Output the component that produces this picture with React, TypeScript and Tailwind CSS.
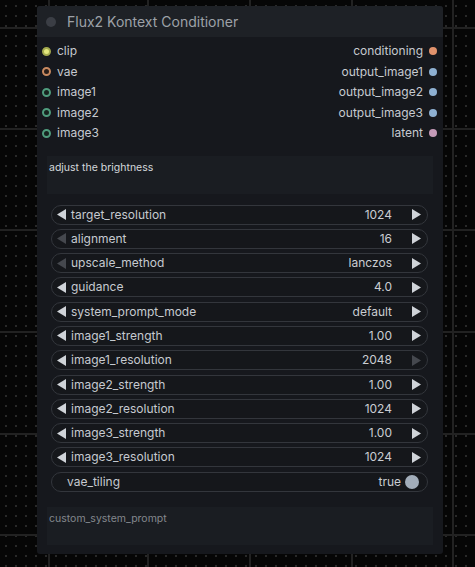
import type { ReactNode } from "react";

type Slot = { name: string; kind: "clip" | "vae" | "image" };
type Output = { name: string; color: string };
type Widget = {
  name: string;
  value: string;
  leftOff?: boolean;
  rightOff?: boolean;
};

const inputs: Slot[] = [
  { name: "clip", kind: "clip" },
  { name: "vae", kind: "vae" },
  { name: "image1", kind: "image" },
  { name: "image2", kind: "image" },
  { name: "image3", kind: "image" },
];

const outputs: Output[] = [
  { name: "conditioning", color: "bg-[#e0926c]" },
  { name: "output_image1", color: "bg-[#8eb0d2]" },
  { name: "output_image2", color: "bg-[#8eb0d2]" },
  { name: "output_image3", color: "bg-[#8eb0d2]" },
  { name: "latent", color: "bg-[#c49ab8]" },
];

const widgets: Widget[] = [
  { name: "target_resolution", value: "1024" },
  { name: "alignment", value: "16", leftOff: true },
  { name: "upscale_method", value: "lanczos", leftOff: true },
  { name: "guidance", value: "4.0" },
  { name: "system_prompt_mode", value: "default" },
  { name: "image1_strength", value: "1.00" },
  { name: "image1_resolution", value: "2048", rightOff: true },
  { name: "image2_strength", value: "1.00" },
  { name: "image2_resolution", value: "1024" },
  { name: "image3_strength", value: "1.00" },
  { name: "image3_resolution", value: "1024" },
];

function CanvasGrid() {
  return (
    <svg className="absolute inset-0" width="475" height="567">
      <defs>
        <pattern id="dots" x="5" y="5" width="10" height="10" patternUnits="userSpaceOnUse">
          <rect x="0" y="0.5" width="2" height="1" fill="#333333" />
          <rect x="0.5" y="0" width="1" height="2" fill="#333333" />
        </pattern>
      </defs>
      <rect width="475" height="567" fill="#060606" />
      <rect width="475" height="567" fill="url(#dots)" />
      {[28, 129, 230, 332, 434, 535].map((y) => (
        <rect key={y} x="0" y={y - 1} width="475" height="2" fill="#222222" />
      ))}
      {[49, 148, 250, 352, 453].map((x) => (
        <rect key={x} x={x - 1} y="0" width="2" height="567" fill="#222222" />
      ))}
    </svg>
  );
}

function InputDot({ kind }: { kind: Slot["kind"] }) {
  if (kind === "clip")
    return (
      <span className="w-[9px] h-[9px] rounded-full bg-[#e2e67e] border-2 border-[#a3a94e]" />
    );
  if (kind === "vae")
    return (
      <span className="w-[9px] h-[9px] rounded-full bg-[#2a1f1a] border-2 border-[#c98a60]" />
    );
  return (
    <span className="w-[9px] h-[9px] rounded-full bg-[#17231f] border-2 border-[#4f9c7d]" />
  );
}

function Arrow({ dir, off }: { dir: "left" | "right"; off?: boolean }) {
  const pts = dir === "left" ? "9,0 9,11 0,5.5" : "0,0 0,11 9,5.5";
  return (
    <svg width="9" height="11" viewBox="0 0 9 11" className="shrink-0">
      <polygon points={pts} fill={off ? "#45484e" : "#cfd3d8"} />
    </svg>
  );
}

function Pill({ children }: { children: ReactNode }) {
  return (
    <div className="flex items-center h-[20px] rounded-full border border-[#33363c] bg-[#15171b] text-[12px] text-[#c6cad0]">
      {children}
    </div>
  );
}

function TextBox({ text, muted }: { text: string; muted?: boolean }) {
  return (
    <div
      className={
        "mx-[10px] h-[38px] bg-[#1a1d22] px-[2px] pt-[4px] text-[10.5px] " +
        (muted ? "text-[#83878d]" : "text-[#d4d8dc]")
      }
    >
      {text}
    </div>
  );
}

export default function App() {
  return (
    <div className="relative w-[475px] h-[567px] overflow-hidden font-['Inter',sans-serif]">
      <CanvasGrid />
      <div className="relative ml-[37px] pt-[6px]">
        <div className="w-[406px] h-[548px] bg-[#16181d] rounded-[3px]">
          {/* title bar */}
          <div className="flex items-center h-[31px] bg-[#1e2126] pl-[9px] rounded-t-[3px]">
            <span className="w-[10px] h-[10px] rounded-full bg-[#3b3e45]" />
            <span className="ml-[11px] text-[14px] text-[#9da1a8]">
              Flux2 Kontext Conditioner
            </span>
          </div>

          {/* slots */}
          <div className="flex justify-between pt-[4px] text-[12px] text-[#c6cad0]">
            <div className="flex flex-col">
              {inputs.map((s) => (
                <div key={s.name} className="flex items-center h-[20.5px] pl-[5px]">
                  <InputDot kind={s.kind} />
                  <span className="ml-[6px]">{s.name}</span>
                </div>
              ))}
            </div>
            <div className="flex flex-col items-end">
              {outputs.map((o) => (
                <div key={o.name} className="flex items-center h-[20.5px] pr-[6px]">
                  <span>{o.name}</span>
                  <span className={"ml-[6px] w-[8px] h-[8px] rounded-full " + o.color} />
                </div>
              ))}
            </div>
          </div>

          <div className="mt-[12px]">
            <TextBox text="adjust the brightness" />
          </div>

          {/* widgets */}
          <div className="flex flex-col gap-[4.3px] mt-[11px] ml-[14px] mr-[15px]">
            {widgets.map((w) => (
              <Pill key={w.name}>
                <div className="flex items-center w-full pl-[5px] pr-[6px]">
                  <Arrow dir="left" off={w.leftOff} />
                  <span className="ml-[5px] flex-1">{w.name}</span>
                  <span className="text-[#cacdd2]">{w.value}</span>
                  <span className="ml-[20px]">
                    <Arrow dir="right" off={w.rightOff} />
                  </span>
                </div>
              </Pill>
            ))}
            <Pill>
              <div className="flex items-center w-full pl-[15px] pr-[8px]">
                <span className="flex-1">vae_tiling</span>
                <span className="text-[#cacdd2]">true</span>
                <span className="ml-[4px] w-[14px] h-[14px] rounded-full bg-[#a2adba]" />
              </div>
            </Pill>
          </div>

          <div className="mt-[15px]">
            <TextBox text="custom_system_prompt" muted />
          </div>
        </div>
      </div>
    </div>
  );
}
